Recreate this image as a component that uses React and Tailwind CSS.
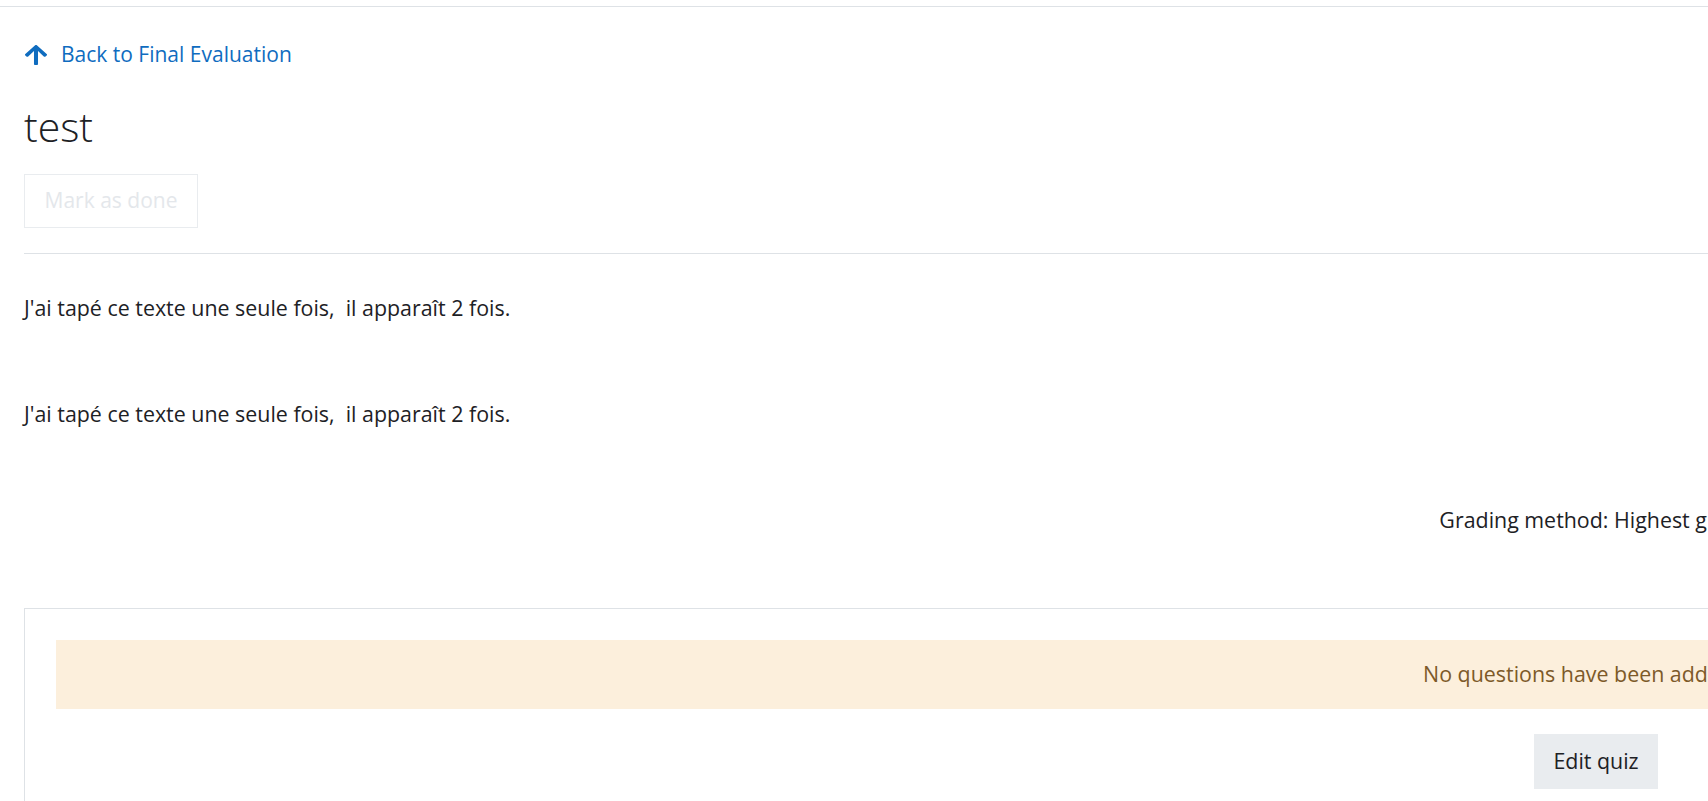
import React from 'react';

const font = "font-['Open_Sans','Noto_Sans',sans-serif]";

function ArrowUp() {
  return (
    <svg viewBox="6 32 436 448" width="22" height="20" preserveAspectRatio="none" fill="currentColor" className="ml-[1px]">
      <path d="M34.9 289.5l-22.2-22.2c-9.4-9.4-9.4-24.6 0-33.9L207 39c9.4-9.4 24.6-9.4 33.9 0l194.3 194.3c9.4 9.4 9.4 24.6 0 33.9L413 289.4c-9.5 9.5-25 9.3-34.3-.4L264 168.6V456c0 13.3-10.7 24-24 24h-32c-13.3 0-24-10.7-24-24V168.6L69.2 289.1c-9.3 9.8-24.8 10-34.3.4z" />
    </svg>
  );
}

export default function App() {
  return (
    <div className={`w-[1708px] h-[801px] overflow-hidden bg-white text-[#1d2125] ${font}`}>
      {/* top rule */}
      <div className="pt-[6px]">
        <div className="border-t border-[#dee2e6]" />
      </div>

      <div className="pl-[24px] w-[3168px]">
        {/* back link */}
        <a href="#" className="mt-[31px] flex items-center gap-[14px] text-[#0f6cbf] text-[21px] leading-[33px]">
          <ArrowUp />
          <span>Back to Final Evaluation</span>
        </a>

        {/* title */}
        <h2 className="mt-[31px] text-[41px] leading-[48px] font-light text-[#1d2125]">test</h2>

        {/* completion */}
        <button
          disabled
          className="mt-[24px] h-[54px] w-[174px] border border-[#e9ecef] text-[21px] text-[#e4e7eb] bg-white"
        >
          Mark as done
        </button>

        <hr className="mt-[25px] border-t border-[#dee2e6]" />

        {/* intro */}
        <div className="text-[21.4px] leading-[33px]">
          <p className="mt-[37px]">J'ai tapé ce texte une seule fois,&nbsp; il apparaît 2 fois.</p>
          <p className="mt-[73px]">J'ai tapé ce texte une seule fois,&nbsp; il apparaît 2 fois.</p>
        </div>

        <div className="w-[3144px]">
          <p className="mt-[73px] text-center text-[21.4px] leading-[33px]">Grading method: Highest grade</p>

          <div className="mt-[72px] border border-[#dee2e6] p-[31px]">
            <div className="bg-[#fcefdc] text-[#7d5a29] h-[69px] flex items-center justify-center text-[21.4px]">
              No questions have been added yet
            </div>
            <div className="mt-[25px] flex justify-center">
              <button className="h-[55px] w-[124px] bg-[#e9ecef] text-[21.4px] text-[#1d2125]">Edit quiz</button>
            </div>
          </div>
        </div>
      </div>
    </div>
  );
}
